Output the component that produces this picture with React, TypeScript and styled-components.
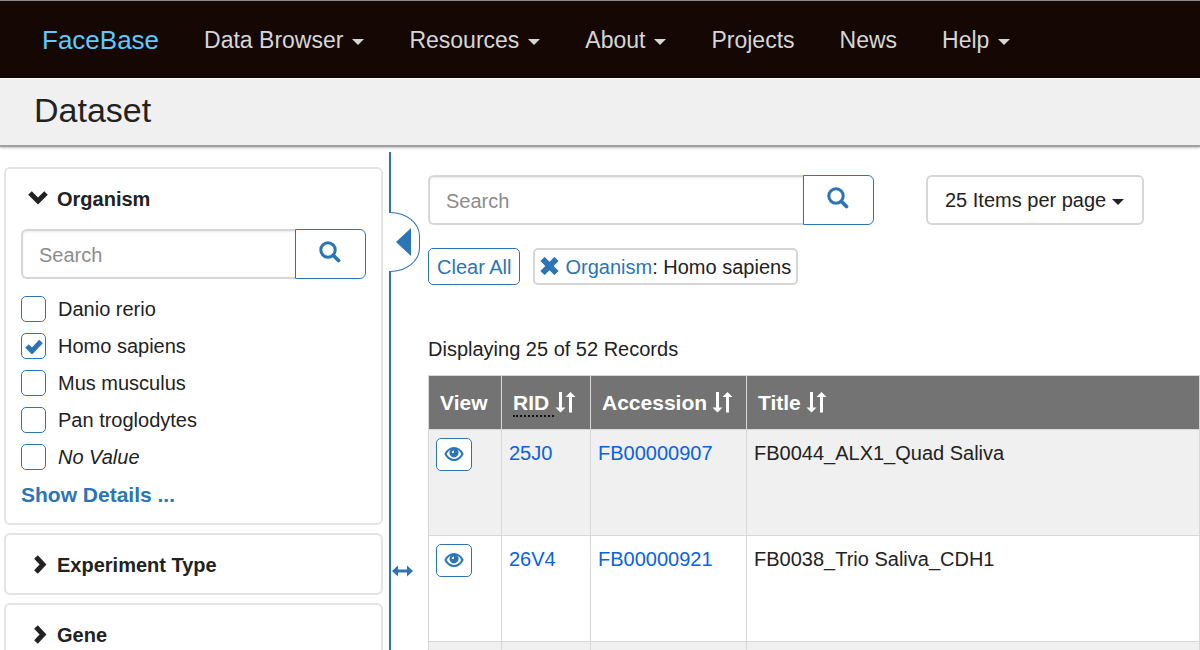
import React, { useState } from "react";
import styled, { createGlobalStyle } from "styled-components";

const GlobalStyle = createGlobalStyle`
  *, *::before, *::after { box-sizing: border-box; }
  body {
    margin: 0;
    background: #fff;
    color: #222;
    font-family: "Liberation Sans", Arial, sans-serif;
    font-size: 20px;
    line-height: 28px;
  }
  button, input { font: inherit; color: inherit; }
`;

const blue = "#2c75b5";
const grey = "#d6d6d6";

const Page = styled.div`
  display: flex;
  flex-direction: column;
  height: 100vh;
  overflow: hidden;
`;

const NavBar = styled.nav`
  display: flex;
  flex: none;
  align-items: center;
  gap: 45px;
  height: 79px;
  padding: 0 42px;
  background: #150704;
  border-top: 1px solid #8c8c8c;
  border-bottom: 1px solid #fff;
`;

const Brand = styled.a`
  color: #5ccbff;
  font-size: 26px;
  text-decoration: none;
`;

const NavLink = styled.a`
  display: flex;
  align-items: center;
  gap: 9px;
  color: #d6d6d6;
  font-size: 23px;
  text-decoration: none;
`;

const Caret = styled.span`
  border: 6px solid transparent;
  border-top-color: currentColor;
  border-bottom: 0;
  margin-top: 4px;
`;

const TitleBar = styled.header`
  flex: none;
  padding: 9px 34px 13px;
  background: #f0f0f0;
  border-bottom: 2px solid #a0a0a0;
  box-shadow: 0 1px 2px rgba(0, 0, 0, 0.25);
`;

const Title = styled.h1`
  margin: 0;
  font-size: 34px;
  font-weight: 400;
  line-height: 44px;
`;

const Body = styled.div`
  display: flex;
  flex: 1;
  min-height: 0;
  padding-top: 5px;
`;

const Sidebar = styled.aside`
  display: flex;
  flex: none;
  flex-direction: column;
  gap: 8px;
  width: 383px;
  padding: 15px 0 0 4px;
  overflow: hidden;
`;

const Panel = styled.section`
  flex: none;
  border: 2px solid #e4e4e4;
  border-radius: 6px;
  padding: 16px 15px 14px;
`;

const PanelHeading = styled.h2`
  display: flex;
  margin: 0;
  font-size: 20px;
  line-height: 28px;
`;

const PanelToggle = styled.button`
  display: flex;
  align-items: center;
  gap: 9px;
  padding: 0 0 0 7px;
  border: 0;
  background: none;
  font-weight: 700;
`;

const SearchGroup = styled.form`
  display: flex;
  flex: 1;
  max-width: 446px;
`;

const SearchInput = styled.input`
  flex: 1;
  min-width: 0;
  height: 50px;
  padding: 2px 16px 0;
  border: 2px solid ${grey};
  border-right: 0;
  border-radius: 6px 0 0 6px;
  background: #fff;
  box-shadow: inset 0 1px 2px rgba(0, 0, 0, 0.08);
  &::placeholder { color: #8c8c8c; opacity: 1; }
`;

const SearchButton = styled.button`
  display: flex;
  align-items: center;
  justify-content: center;
  width: 71px;
  height: 50px;
  padding: 0 2px 4px 0;
  border: 1px solid ${blue};
  border-radius: 0 6px 6px 0;
  background: #fff;
  color: ${blue};
`;

const PanelBody = styled.div`
  padding: 16px 0 0;
`;

const Options = styled.ul`
  display: flex;
  flex-direction: column;
  gap: 9px;
  margin: 16px 0 10px;
  padding: 0;
  list-style: none;
`;

const Option = styled.label<{ $italic?: boolean }>`
  display: flex;
  align-items: center;
  gap: 12px;
  font-style: ${(p) => (p.$italic ? "italic" : "normal")};
`;

const CheckWrap = styled.span`
  display: grid;
  flex: none;
  place-items: center;
  width: 25px;
  height: 28px;
  > * { grid-area: 1 / 1; }
  > svg { pointer-events: none; }
`;

const Check = styled.input`
  appearance: none;
  width: 25px;
  height: 26px;
  margin: 0;
  border: 1px solid ${blue};
  border-radius: 5px;
  background: #fff;
`;

const DetailsLink = styled.a`
  color: ${blue};
  font-size: 21px;
  font-weight: 700;
  text-decoration: none;
`;

const Rail = styled.div`
  display: flex;
  flex: none;
  flex-direction: column;
  width: 31px;
  margin-left: 6px;
  color: ${blue};
`;

const RailLine = styled.div<{ $grow?: boolean }>`
  display: flex;
  align-items: flex-start;
  flex: ${(p) => (p.$grow ? "1" : "none")};
  height: 60px;
  padding: ${(p) => (p.$grow ? "293px 0 0 1px" : "0")};
  border-left: 2px solid ${blue};
`;

const CollapseButton = styled.button`
  display: flex;
  flex: none;
  align-items: center;
  width: 31px;
  height: 60px;
  padding: 0 0 0 7px;
  border: 1px solid ${blue};
  border-left: 0;
  border-radius: 0 30px 30px 0 / 0 24px 24px 0;
  background: #fff;
  color: ${blue};
`;

const Main = styled.main`
  flex: 1;
  min-width: 0;
  padding: 23px 0 0 8px;
  overflow: hidden;
`;

const Toolbar = styled.div`
  display: flex;
  gap: 52px;
`;

const PageSize = styled.button`
  display: flex;
  align-items: center;
  gap: 6px;
  height: 50px;
  padding: 0 18px 0 17px;
  border: 2px solid ${grey};
  border-radius: 6px;
  background: #fff;
  white-space: nowrap;
`;

const Filters = styled.div`
  display: flex;
  gap: 13px;
  margin-top: 23px;
`;

const ClearButton = styled.button`
  height: 37px;
  padding: 1px 8px 0;
  border: 1px solid ${blue};
  border-radius: 5px;
  background: #fff;
  color: ${blue};
`;

const FilterChip = styled.div`
  display: flex;
  align-items: center;
  height: 37px;
  padding: 1px 5px 0;
  border: 2px solid ${grey};
  border-radius: 5px;
  white-space: nowrap;
`;

const RemoveButton = styled.button`
  display: flex;
  margin-right: 6px;
  padding: 0 0 2px;
  border: 0;
  background: none;
  color: ${blue};
`;

const FilterName = styled.a`
  color: ${blue};
  text-decoration: none;
`;

const Summary = styled.p`
  margin: 50px 0 12px;
`;

const Table = styled.table`
  width: 100%;
  border-collapse: collapse;
  table-layout: fixed;
`;

const HeadCell = styled.th<{ $width?: number }>`
  width: ${(p) => (p.$width ? `${p.$width}px` : "auto")};
  height: 54px;
  padding: 0 0 0 11px;
  border: 1px solid #d8d8d8;
  background: #737373;
  color: #fff;
  font-size: 21px;
  text-align: left;
`;

const HeadLabel = styled.span`
  display: flex;
  align-items: center;
  gap: 5px;
`;

const HeadTerm = styled.abbr`
  margin: 2px -4px 0 0;
  padding-right: 5px;
  border-bottom: 2px dotted #111;
  line-height: 24px;
  text-decoration: none;
`;

const Row = styled.tr`
  &:nth-child(odd) { background: #f0f0f0; }
`;

const Cell = styled.td`
  height: 106px;
  padding: 8px 7px;
  border: 1px solid #d8d8d8;
  line-height: 30px;
  vertical-align: top;
  white-space: nowrap;
`;

const RecordLink = styled.a`
  color: #0a62dc;
  text-decoration: none;
`;

const ViewButton = styled.button`
  display: flex;
  align-items: center;
  justify-content: center;
  width: 36px;
  height: 33px;
  padding: 0 0 2px;
  border: 1px solid ${blue};
  border-radius: 5px;
  background: #fff;
  color: ${blue};
`;

const SearchIcon = () => (
  <svg width="22" height="22" viewBox="0 0 22 22" fill="none" stroke="currentColor" aria-hidden="true">
    <circle cx="9" cy="9" r="7.200" strokeWidth="3" />
    <path d="M14.500 14.500l5 5" strokeWidth="3.800" strokeLinecap="round" />
  </svg>
);

const ChevronIcon = ({ open }: { open?: boolean }) => (
  <svg width="20" height="20" viewBox="0 0 20 20" fill="none" stroke="currentColor" strokeWidth="5" aria-hidden="true">
    {open ? <path d="M2 4l8 8 8-8" /> : <path d="M8 2l7 7.500-7 7.500" />}
  </svg>
);

const CheckIcon = () => (
  <svg width="18" height="16" viewBox="0 0 18 16" fill="none" stroke={blue} strokeWidth="5" aria-hidden="true">
    <path d="M2 8l5 5 9-9.500" />
  </svg>
);

const CrossIcon = () => (
  <svg width="19" height="18" viewBox="0 0 19 18" fill="none" stroke="currentColor" strokeWidth="6" aria-hidden="true">
    <path d="M2.500 2l14 14M16.500 2l-14 14" />
  </svg>
);

const TriangleIcon = () => (
  <svg width="15" height="28" viewBox="0 0 15 28" fill="currentColor" aria-hidden="true">
    <path d="M15 0v28L0 14z" />
  </svg>
);

const ResizeIcon = () => (
  <svg width="21" height="12" viewBox="0 0 21 12" fill="currentColor" aria-hidden="true">
    <path d="M0 6l6-5.500V4.500h9V.5L21 6l-6 5.500V7.500H6v4z" />
  </svg>
);

const SortIcon = () => (
  <svg width="21" height="24" viewBox="0 0 21 24" fill="currentColor" aria-hidden="true">
    <path d="M4 1h3v15.500h3.500L5.500 21.500 .5 16.500H4z" />
    <path d="M14 21.500h3V6h3.500L15.500 1l-5 5H14z" />
  </svg>
);

const EyeIcon = () => (
  <svg width="20" height="16" viewBox="0 0 20 16" aria-hidden="true">
    <path
      d="M1.500 8C3.500 4 6.500 2 10 2s6.500 2 8.500 6c-2 4-5 6-8.500 6s-6.500-2-8.500-6z"
      fill="none"
      stroke="currentColor"
      strokeWidth="2"
    />
    <circle cx="10" cy="6.800" r="4.600" fill="currentColor" />
    <path d="M7.800 7c0-1.600.8-2.600 2.200-2.600L9.800 7z" fill="#fff" />
  </svg>
);

const navItems = [
  { label: "Data Browser", menu: true },
  { label: "Resources", menu: true },
  { label: "About", menu: true },
  { label: "Projects", menu: false },
  { label: "News", menu: false },
  { label: "Help", menu: true },
];

const organisms = ["Danio rerio", "Homo sapiens", "Mus musculus", "Pan troglodytes", "No Value"];

const records = [
  { rid: "25J0", accession: "FB00000907", title: "FB0044_ALX1_Quad Saliva" },
  { rid: "26V4", accession: "FB00000921", title: "FB0038_Trio Saliva_CDH1" },
  { rid: "", accession: "", title: "" },
];

const Search = ({ label }: { label: string }) => (
  <SearchGroup role="search" onSubmit={(e) => e.preventDefault()}>
    <SearchInput type="text" placeholder="Search" aria-label={label} />
    <SearchButton type="submit" aria-label={label}>
      <SearchIcon />
    </SearchButton>
  </SearchGroup>
);

export default function App() {
  const [selected, setSelected] = useState<string[]>(["Homo sapiens"]);
  const toggle = (name: string) =>
    setSelected((s) => (s.includes(name) ? s.filter((n) => n !== name) : [...s, name]));

  return (
    <Page>
      <GlobalStyle />
      <NavBar>
        <Brand href="#">FaceBase</Brand>
        {navItems.map((item) => (
          <NavLink key={item.label} href="#">
            {item.label}
            {item.menu && <Caret />}
          </NavLink>
        ))}
      </NavBar>
      <TitleBar>
        <Title>Dataset</Title>
      </TitleBar>
      <Body>
        <Sidebar>
          <Panel>
            <PanelHeading>
              <PanelToggle type="button" aria-expanded="true">
                <ChevronIcon open />
                Organism
              </PanelToggle>
            </PanelHeading>
            <PanelBody>
              <Search label="Search organisms" />
              <Options>
                {organisms.map((name) => (
                  <li key={name}>
                    <Option $italic={name === "No Value"}>
                      <CheckWrap>
                        <Check type="checkbox" checked={selected.includes(name)} onChange={() => toggle(name)} />
                        {selected.includes(name) && <CheckIcon />}
                      </CheckWrap>
                      {name}
                    </Option>
                  </li>
                ))}
              </Options>
              <DetailsLink href="#">Show Details ...</DetailsLink>
            </PanelBody>
          </Panel>
          {["Experiment Type", "Gene"].map((name) => (
            <Panel key={name}>
              <PanelHeading>
                <PanelToggle type="button" aria-expanded="false">
                  <ChevronIcon />
                  {name}
                </PanelToggle>
              </PanelHeading>
            </Panel>
          ))}
        </Sidebar>
        <Rail>
          <RailLine />
          <CollapseButton type="button" aria-label="Hide sidebar">
            <TriangleIcon />
          </CollapseButton>
          <RailLine $grow>
            <ResizeIcon />
          </RailLine>
        </Rail>
        <Main>
          <Toolbar>
            <Search label="Search records" />
            <PageSize type="button">
              25 Items per page
              <Caret />
            </PageSize>
          </Toolbar>
          <Filters>
            <ClearButton type="button">Clear All</ClearButton>
            <FilterChip>
              <RemoveButton type="button" aria-label="Remove filter">
                <CrossIcon />
              </RemoveButton>
              <span>
                <FilterName href="#">Organism</FilterName>: Homo sapiens
              </span>
            </FilterChip>
          </Filters>
          <Summary>Displaying 25 of 52 Records</Summary>
          <Table>
            <thead>
              <tr>
                <HeadCell $width={73}>View</HeadCell>
                <HeadCell $width={89}>
                  <HeadLabel>
                    <HeadTerm>RID</HeadTerm>
                    <SortIcon />
                  </HeadLabel>
                </HeadCell>
                <HeadCell $width={156}>
                  <HeadLabel>
                    Accession
                    <SortIcon />
                  </HeadLabel>
                </HeadCell>
                <HeadCell>
                  <HeadLabel>
                    Title
                    <SortIcon />
                  </HeadLabel>
                </HeadCell>
              </tr>
            </thead>
            <tbody>
              {records.map((r, i) => (
                <Row key={i}>
                  <Cell>
                    <ViewButton type="button" aria-label="View record">
                      <EyeIcon />
                    </ViewButton>
                  </Cell>
                  <Cell>
                    <RecordLink href="#">{r.rid}</RecordLink>
                  </Cell>
                  <Cell>
                    <RecordLink href="#">{r.accession}</RecordLink>
                  </Cell>
                  <Cell>{r.title}</Cell>
                </Row>
              ))}
            </tbody>
          </Table>
        </Main>
      </Body>
    </Page>
  );
}
